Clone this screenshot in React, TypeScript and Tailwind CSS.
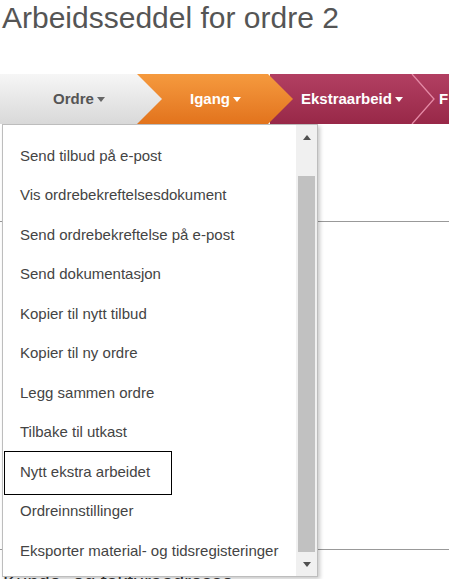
import React from "react";

const items = [
  "Send tilbud på e-post",
  "Vis ordrebekreftelsesdokument",
  "Send ordrebekreftelse på e-post",
  "Send dokumentasjon",
  "Kopier til nytt tilbud",
  "Kopier til ny ordre",
  "Legg sammen ordre",
  "Tilbake til utkast",
  "Nytt ekstra arbeidet",
  "Ordreinnstillinger",
  "Eksporter material- og tidsregisteringer",
];

function Caret({ color = "#fff" }: { color?: string }) {
  return (
    <svg width="8" height="5" viewBox="0 0 8 5" className="ml-[3px] mt-[1px]">
      <path d="M0 0 L8 0 L4 5 Z" fill={color} />
    </svg>
  );
}

export default function App() {
  return (
    <div className="relative w-[449px] h-[579px] overflow-hidden bg-white font-['Liberation_Sans',Arial,sans-serif]">
      {/* Page title */}
      <h1 className="h-[74px] pt-[3px] pl-[2px] text-[30px] leading-[30px] text-[#555]">
        Arbeidsseddel for ordre 2
      </h1>

      {/* Status steps */}
      <div className="flex h-[50px] text-[15px] font-bold">
        <div className="relative z-30 flex w-[162px] shrink-0 items-center pl-[53px] text-[#555] bg-gradient-to-b from-[#f6f6f6] to-[#d9d9d9] [clip-path:polygon(0_0,137px_0,162px_50%,137px_100%,0_100%)]">
          Ordre
          <Caret color="#666" />
        </div>
        <div className="relative z-20 -ml-[25px] flex w-[156px] shrink-0 items-center pl-[53px] text-white bg-gradient-to-b from-[#f59a3e] to-[#e2731c] [clip-path:polygon(0_0,131px_0,156px_50%,131px_100%,0_100%)]">
          Igang
          <Caret />
        </div>
        <div className="relative z-10 -ml-[23px] flex flex-1 items-center pl-[31px] text-white bg-gradient-to-b from-[#b23f62] to-[#982848]">
          Ekstraarbeid
          <Caret />
          <svg width="26" height="50" viewBox="0 0 26 50" className="ml-[8px] shrink-0">
            <path d="M1 0 L23 25 L1 50" fill="none" stroke="#e58aa6" strokeWidth="1.3" />
          </svg>
          <span className="ml-[2px]">F</span>
        </div>
      </div>

      {/* Page content behind the menu */}
      <div className="flex flex-col">
        <div className="h-[97px]" />
        <div className="h-px bg-[#999]" />
        <div className="h-[327px]" />
        <div className="h-px bg-[#999]" />
        <div className="pt-[22px] pl-[3px] text-[20px] leading-[20px] text-[#333]">
          Kunde- og fakturaadresse
        </div>
      </div>

      {/* Dropdown menu */}
      <div className="absolute left-[2px] top-[124px] flex h-[453px] w-[316px] border border-[#bdbdbd] bg-white shadow-[2px_2px_4px_rgba(0,0,0,0.22)]">
        <div className="flex-1 overflow-hidden pt-[11px] text-[15px] text-[#444]">
          {items.map((label, i) => (
            <div key={label} className="relative flex h-[39.5px] items-center whitespace-nowrap pl-[17px]">
              {label}
              {i === 8 && (
                <div className="absolute left-[1px] top-[-1px] h-[44px] w-[168px] border border-black" />
              )}
            </div>
          ))}
        </div>
        <div className="flex w-[21px] flex-col bg-[#f0f0f0]">
          <div className="flex h-[24px] items-center justify-center">
            <svg width="8" height="5" viewBox="0 0 8 5">
              <path d="M0 5 L8 5 L4 0 Z" fill="#505050" />
            </svg>
          </div>
          <div className="h-[27px]" />
          <div className="mx-[2px] h-[376px] bg-[#c1c1c1]" />
          <div className="flex-1" />
          <div className="flex h-[24px] items-center justify-center">
            <svg width="8" height="5" viewBox="0 0 8 5">
              <path d="M0 0 L8 0 L4 5 Z" fill="#505050" />
            </svg>
          </div>
        </div>
      </div>
    </div>
  );
}
